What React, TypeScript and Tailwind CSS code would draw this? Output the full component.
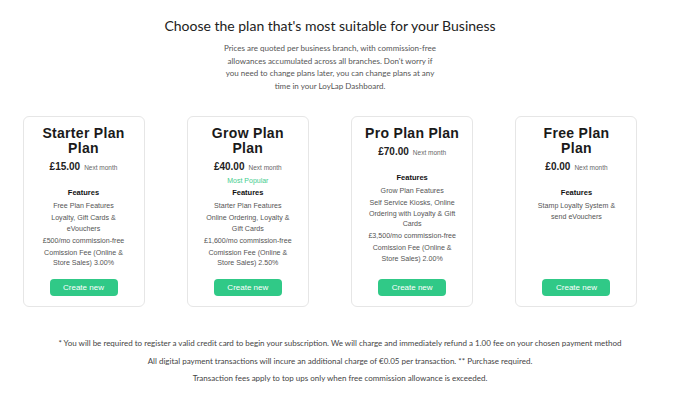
const plans = [
  {
    title: "Starter Plan Plan",
    price: "£15.00",
    popular: false,
    features: [
      "Free Plan Features",
      "Loyalty, Gift Cards & eVouchers",
      "£500/mo commission-free",
      "Comission Fee (Online & Store Sales) 3.00%",
    ],
  },
  {
    title: "Grow Plan Plan",
    price: "£40.00",
    popular: true,
    features: [
      "Starter Plan Features",
      "Online Ordering, Loyalty & Gift Cards",
      "£1,600/mo commission-free",
      "Comission Fee (Online & Store Sales) 2.50%",
    ],
  },
  {
    title: "Pro Plan Plan",
    price: "£70.00",
    popular: false,
    features: [
      "Grow Plan Features",
      "Self Service Kiosks, Online Ordering with Loyalty & Gift Cards",
      "£3,500/mo commission-free",
      "Comission Fee (Online & Store Sales) 2.00%",
    ],
  },
  {
    title: "Free Plan Plan",
    price: "£0.00",
    popular: false,
    features: ["Stamp Loyalty System & send eVouchers"],
  },
]

function PlanCard({ plan }: { plan: (typeof plans)[number] }) {
  return (
    <div className="w-[122px] h-[191px] flex flex-col items-center rounded-[6px] border border-[#e6e6e6] bg-white pt-[9px] pb-[10px] px-[6px] text-center font-['Liberation_Sans',Arial,sans-serif]">
      <h3 className="text-[14px] leading-[15px] font-black tracking-[0.3px] text-[#1a1a1a] px-[4px]">{plan.title}</h3>
      <div className="mt-[4px] flex items-baseline gap-[4px] leading-[14px]">
        <span className="text-[10px] font-bold text-[#222]">{plan.price}</span>
        <span className="text-[6.5px] text-[#666]">Next month</span>
      </div>
      <p className={"text-[7px] leading-[12px] text-[#45cd8e] " + (plan.popular ? "" : "invisible")}>Most Popular</p>
      <p className="text-[7.5px] leading-[12px] font-bold text-[#111]">Features</p>
      <ul className="mt-[2px] w-[90px] flex flex-col gap-[1.5px] text-[7.1px] leading-[10.5px] text-[#555]">
        {plan.features.map((f) => (
          <li key={f}>{f}</li>
        ))}
      </ul>
      <button className="mt-auto w-[68px] h-[17px] rounded-[4px] bg-[#30c987] text-white text-[8px] font-['Liberation_Sans',Arial,sans-serif]">
        Create new
      </button>
    </div>
  )
}

export default function App() {
  return (
    <div className="w-[688px] h-[403px] bg-white overflow-hidden font-['Lato',sans-serif]">
      <div className="w-[660px] flex flex-col items-center pt-[17px]">
        <h1 className="text-[14px] leading-[18px] text-[#222]">Choose the plan that's most suitable for your Business</h1>
        <p className="mt-[7px] text-[8px] leading-[12.5px] text-[#555] text-center">
          Prices are quoted per business branch, with commission-free
          <br />
          allowances accumulated across all branches. Don't worry if
          <br />
          you need to change plans later, you can change plans at any
          <br />
          time in your LoyLap Dashboard.
        </p>
        <div className="mt-[24px] w-[615px] flex justify-between">
          {plans.map((p) => (
            <PlanCard key={p.title} plan={p} />
          ))}
        </div>
      </div>
      <div className="mt-[30px] w-[680px] flex flex-col items-center gap-[5px] text-[8px] leading-[12.5px] text-[#444] text-center">
        <p>* You will be required to register a valid credit card to begin your subscription. We will charge and immediately refund a 1.00 fee on your chosen payment method</p>
        <p>All digital payment transactions will incure an additional charge of €0.05 per transaction. ** Purchase required.</p>
        <p>Transaction fees apply to top ups only when free commission allowance is exceeded.</p>
      </div>
    </div>
  )
}
